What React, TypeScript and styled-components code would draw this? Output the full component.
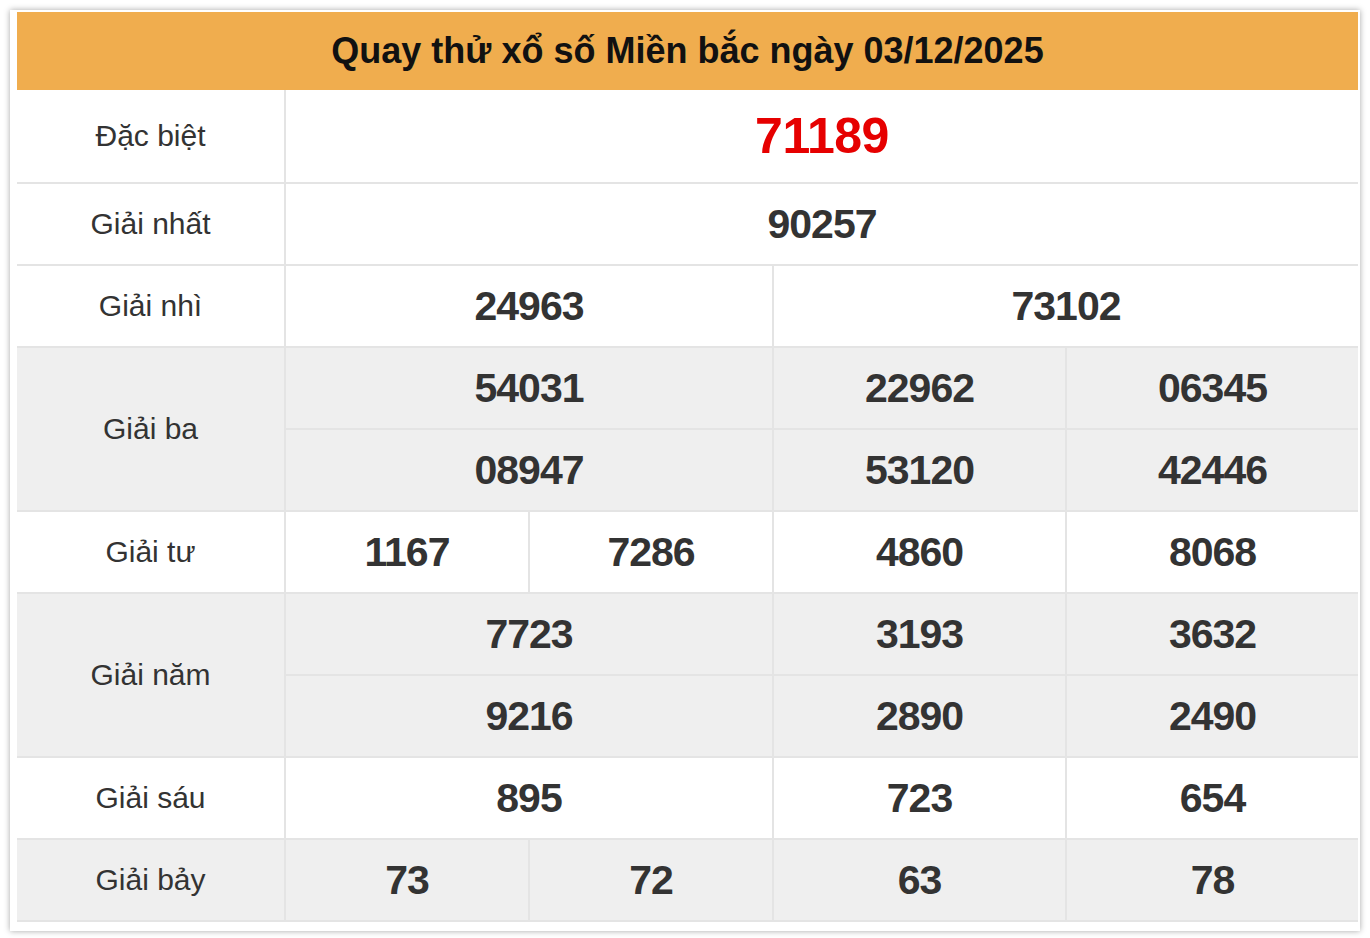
import styled, { createGlobalStyle } from 'styled-components'

const GlobalStyle = createGlobalStyle`
  body {
    margin: 0;
    background: #ffffff;
    font-family: "Liberation Sans", Arial, sans-serif;
  }
`

type Cell = { value: string; span?: number; special?: boolean }
type Prize = { label: string; rows: Cell[][]; shaded?: boolean }

const prizes: Prize[] = [
  { label: 'Đặc biệt', rows: [[{ value: '71189', span: 4, special: true }]] },
  { label: 'Giải nhất', rows: [[{ value: '90257', span: 4 }]] },
  { label: 'Giải nhì', rows: [[{ value: '24963', span: 2 }, { value: '73102', span: 2 }]] },
  {
    label: 'Giải ba',
    shaded: true,
    rows: [
      [{ value: '54031', span: 2 }, { value: '22962' }, { value: '06345' }],
      [{ value: '08947', span: 2 }, { value: '53120' }, { value: '42446' }],
    ],
  },
  { label: 'Giải tư', rows: [[{ value: '1167' }, { value: '7286' }, { value: '4860' }, { value: '8068' }]] },
  {
    label: 'Giải năm',
    shaded: true,
    rows: [
      [{ value: '7723', span: 2 }, { value: '3193' }, { value: '3632' }],
      [{ value: '9216', span: 2 }, { value: '2890' }, { value: '2490' }],
    ],
  },
  { label: 'Giải sáu', rows: [[{ value: '895', span: 2 }, { value: '723' }, { value: '654' }]] },
  { label: 'Giải bảy', shaded: true, rows: [[{ value: '73' }, { value: '72' }, { value: '63' }, { value: '78' }]] },
]

const App = () => {
  return (
    <>
      <GlobalStyle />
      <Card>
        <Title>Quay thử xổ số Miền bắc ngày 03/12/2025</Title>
        <ResultGrid>
          {prizes.map((prize) => (
            <Group key={prize.label} prize={prize} />
          ))}
        </ResultGrid>
      </Card>
    </>
  )
}

const Group = ({ prize }: { prize: Prize }) => (
  <>
    <Label $rows={prize.rows.length} $shaded={prize.shaded}>
      {prize.label}
    </Label>
    {prize.rows.flat().map((cell, i) => (
      <Number key={i} $span={cell.span ?? 1} $shaded={prize.shaded} $special={cell.special}>
        {cell.value}
      </Number>
    ))}
  </>
)

export default App

const Card = styled.div`
  margin: 10px;
  width: 1350px;
  box-sizing: border-box;
  padding: 2px 2px 9px 7px;
  background: #ffffff;
  box-shadow: 0 0 6px rgba(0, 0, 0, 0.35);
`

const Title = styled.h2`
  margin: 0;
  height: 78px;
  display: flex;
  align-items: center;
  justify-content: center;
  background: #f0ad4e;
  color: #111;
  font-size: 36px;
  font-weight: 700;
`

const ResultGrid = styled.div`
  display: grid;
  grid-template-columns: 267px 242px 242px 291px 291px;
  grid-template-rows: 92px repeat(9, 80px);
  gap: 2px;
  padding-bottom: 2px;
  background: #e4e4e4;
  width: 1341px;
`

const Label = styled.div<{ $rows: number; $shaded?: boolean }>`
  grid-row: span ${(p) => p.$rows};
  display: flex;
  align-items: center;
  justify-content: center;
  background: ${(p) => (p.$shaded ? '#efefef' : '#ffffff')};
  color: #333;
  font-size: 30px;
`

const Number = styled.div<{ $span: number; $shaded?: boolean; $special?: boolean }>`
  grid-column: span ${(p) => p.$span};
  display: flex;
  align-items: center;
  justify-content: center;
  background: ${(p) => (p.$shaded ? '#efefef' : '#ffffff')};
  color: ${(p) => (p.$special ? '#e60000' : '#333')};
  font-size: ${(p) => (p.$special ? '50px' : '41px')};
  font-weight: 700;
  letter-spacing: ${(p) => (p.$special ? '-0.5px' : '-1px')};
`
